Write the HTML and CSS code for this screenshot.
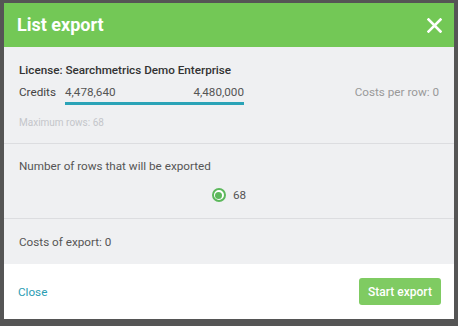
FILE: index.html
```html
<!DOCTYPE html>
<html lang="en">
<head>
    <meta charset="UTF-8">
    <meta name="viewport" content="width=device-width, initial-scale=1.0">
    <title>List export</title>
    <link rel="stylesheet" href="styles.css">
</head>
<body>
    <div class="modal">
        <div class="modal-header">
            <h1>List export</h1>
            <button class="close-x" aria-label="Close">
                <svg width="15" height="15" viewBox="0 0 15 15">
                    <path d="M1.5 1.5 L13.5 13.5 M13.5 1.5 L1.5 13.5" stroke="#fff" stroke-width="2.6" stroke-linecap="square" fill="none"/>
                </svg>
            </button>
        </div>

        <div class="section license">
            <div class="license-name">License: Searchmetrics Demo Enterprise</div>
            <div class="credits-row">
                <span class="credits-label">Credits</span>
                <div class="credits-bar">
                    <div class="credits-values">
                        <span>4,478,640</span>
                        <span>4,480,000</span>
                    </div>
                    <div class="bar"></div>
                </div>
                <span class="cost-per-row">Costs per row: 0</span>
            </div>
            <div class="max-rows">Maximum rows: 68</div>
        </div>

        <div class="section rows">
            <div class="label">Number of rows that will be exported</div>
            <label class="radio-option">
                <span class="radio"><span class="dot"></span></span>
                <span>68</span>
            </label>
        </div>

        <div class="section costs">
            <div class="label">Costs of export: 0</div>
        </div>

        <div class="modal-footer">
            <a href="#" class="close-link">Close</a>
            <button class="start-btn">Start export</button>
        </div>
    </div>
</body>
</html>
```

FILE: styles.css
```css
* {
    box-sizing: border-box;
    margin: 0;
    padding: 0;
}

body {
    font-family: Roboto, 'Liberation Sans', Arial, sans-serif;
    font-size: 11.7px;
    background: #555;
    height: 326px;
    overflow: hidden;
}

.modal {
    width: 450px;
    height: 316px;
    margin: 3px 0 0 4px;
    background: #eff0f2;
    display: flex;
    flex-direction: column;
}

.modal-header {
    height: 44px;
    background: #73c856;
    display: flex;
    align-items: center;
    justify-content: space-between;
    padding: 0 12px 0 13px;
}

.modal-header h1 {
    color: #fff;
    font-size: 18px;
    font-weight: 700;
    line-height: 20px;
    margin-top: -1px;
}

.close-x {
    background: none;
    border: none;
    width: 15px;
    height: 15px;
    display: flex;
    cursor: pointer;
}

.section {
    padding: 14px 15px 14px 15px;
    color: #555;
    line-height: 16px;
}

.section + .section {
    border-top: 1px solid #dcdde0;
}

.license {
    padding-top: 15px;
}

.license-name {
    font-weight: 500;
    color: #333;
}

.credits-row {
    display: flex;
    align-items: flex-start;
    margin-top: 6px;
    color: #444;
}

.credits-label {
    width: 46px;
}

.credits-bar {
    width: 179px;
}

.credits-values {
    display: flex;
    justify-content: space-between;
    color: #555;
}

.bar {
    height: 3px;
    margin-top: 2px;
    background: #2aa3b7;
}

.cost-per-row {
    margin-left: auto;
    color: #999;
}

.max-rows {
    margin-top: 11px;
    font-size: 10px;
    line-height: 13px;
    color: #c4c6ca;
}

.rows {
    padding-bottom: 15px;
}

.radio-option {
    display: flex;
    justify-content: center;
    align-items: center;
    gap: 7px;
    margin-top: 13px;
}

.radio {
    width: 14px;
    height: 14px;
    border: 2px solid #5cb85c;
    border-radius: 50%;
    display: flex;
    align-items: center;
    justify-content: center;
    background: #fff;
}

.radio .dot {
    width: 7px;
    height: 7px;
    border-radius: 50%;
    background: #5cb85c;
}

.costs {
    padding-top: 15px;
}

.modal-footer {
    flex: 1;
    background: #fff;
    display: flex;
    align-items: center;
    justify-content: space-between;
    padding: 0 13px 0 14px;
}

.close-link {
    color: #2a9db3;
    text-decoration: none;
}

.start-btn {
    width: 82px;
    height: 27px;
    border: none;
    border-radius: 3px;
    background: #7fcb62;
    color: #fff;
    font-family: inherit;
    font-size: 12px;
    font-weight: 500;
    cursor: pointer;
}
```
